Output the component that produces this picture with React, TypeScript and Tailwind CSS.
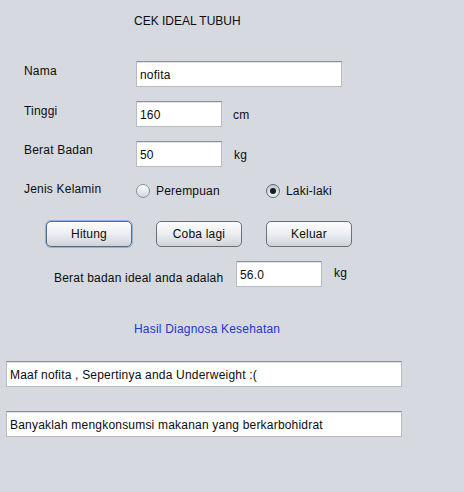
import React from "react";

function Field({ value, className = "" }: { value: string; className?: string }) {
  return (
    <div
      className={`h-[26px] flex items-center pt-[1px] pl-[3px] bg-white border border-[#b8bcc2] border-t-[#8c9096] shadow-[inset_0_1px_0_#dfe1e4] ${className}`}
    >
      {value}
    </div>
  );
}

function Radio({ checked }: { checked?: boolean }) {
  return (
    <div
      className={`w-[14px] h-[14px] rounded-full border flex items-center justify-center shrink-0 ${
        checked
          ? "border-[#5f6873] bg-gradient-to-b from-[#c4c9d0] to-[#eef0f3]"
          : "border-[#8a9099] bg-gradient-to-b from-[#ffffff] to-[#d3d7dd]"
      }`}
    >
      {checked && <div className="w-[6px] h-[6px] rounded-full bg-[#1b1d21]" />}
    </div>
  );
}

function Button({ label, focused }: { label: string; focused?: boolean }) {
  return (
    <div
      className={`w-[86px] h-[26px] rounded-[5px] border flex items-center justify-center bg-gradient-to-b from-[#fdfdfd] via-[#eceef1] to-[#cfd3d9] ${
        focused
          ? "border-[#5b6a7c] shadow-[0_0_0_1px_#8db3de]"
          : "border-[#6a7079]"
      }`}
    >
      {label}
    </div>
  );
}

export default function App() {
  return (
    <div className="w-[464px] h-[492px] bg-[#d6d9df] text-[12px] leading-[14px] tracking-[0.2px] text-[#0c0c0c] font-['Liberation_Sans',Arial,sans-serif] pt-[14px] overflow-hidden">
      <div className="pl-[134px] tracking-normal">CEK IDEAL TUBUH</div>

      <div className="flex items-start mt-[33px]">
        <div className="pl-[24px] w-[136px] mt-[3px]">Nama</div>
        <Field value="nofita" className="w-[206px]" />
      </div>

      <div className="flex items-start mt-[14px]">
        <div className="pl-[24px] w-[136px] mt-[3px]">Tinggi</div>
        <Field value="160" className="w-[86px]" />
        <div className="ml-[11px] mt-[7px]">cm</div>
      </div>

      <div className="flex items-start mt-[14px]">
        <div className="pl-[24px] w-[136px] mt-[2px]">Berat Badan</div>
        <Field value="50" className="w-[86px]" />
        <div className="ml-[12px] mt-[7px]">kg</div>
      </div>

      <div className="flex items-start mt-[17px]">
        <div className="pl-[24px] w-[136px] -mt-[2px]">Jenis Kelamin</div>
        <div className="flex items-start w-[130px]">
          <Radio />
          <span className="ml-[6px]">Perempuan</span>
        </div>
        <div className="flex items-start">
          <Radio checked />
          <span className="ml-[6px]">Laki-laki</span>
        </div>
      </div>

      <div className="flex gap-[24px] pl-[46px] mt-[23px]">
        <Button label="Hitung" focused />
        <Button label="Coba lagi" />
        <Button label="Keluar" />
      </div>

      <div className="flex items-start mt-[14px]">
        <div className="pl-[54px] w-[236px] mt-[10px]">Berat badan ideal anda adalah</div>
        <Field value="56.0" className="w-[86px] items-start pt-[6px]" />
        <div className="ml-[12px] mt-[5px]">kg</div>
      </div>

      <div className="pl-[134px] mt-[35px] text-[#2436cf]">Hasil Diagnosa Kesehatan</div>

      <Field value="Maaf nofita , Sepertinya anda Underweight :(" className="ml-[6px] w-[396px] mt-[25px]" />
      <Field value="Banyaklah mengkonsumsi makanan yang berkarbohidrat" className="ml-[6px] w-[396px] mt-[24px]" />
    </div>
  );
}
